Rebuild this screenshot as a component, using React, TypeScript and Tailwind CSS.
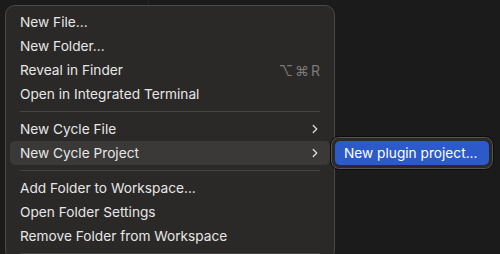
import { ChevronRight } from 'lucide-react';

type Item = { label: string; shortcut?: string; sub?: boolean; active?: boolean };

const groups: Item[][] = [
  [
    { label: 'New File...' },
    { label: 'New Folder...' },
    { label: 'Reveal in Finder', shortcut: '⌥⌘R' },
    { label: 'Open in Integrated Terminal' },
  ],
  [
    { label: 'New Cycle File', sub: true },
    { label: 'New Cycle Project', sub: true, active: true },
  ],
  [
    { label: 'Add Folder to Workspace...' },
    { label: 'Open Folder Settings' },
    { label: 'Remove Folder from Workspace' },
  ],
];

function Row({ item }: { item: Item }) {
  return (
    <div
      className={`relative flex h-6 items-center rounded-[5px] pl-[10px] pr-[8px] ${
        item.active ? 'bg-[#3a3938]' : ''
      }`}
    >
      <span className="flex-1 text-[13.7px] text-[#e6e6e6]">{item.label}</span>
      {item.shortcut && (
        <span className="text-[14px] tracking-[2px] text-[#7c7b7a]">{item.shortcut}</span>
      )}
      {item.sub && <ChevronRight size={14} strokeWidth={2.2} className="text-[#dcdcdc]" />}
      {item.active && (
        <div className="absolute left-[320px] top-[-5px] rounded-[9px] border border-[#0c0c0c] bg-[#2b2a29] p-[4px] shadow-[inset_0_0_0_1px_#545454]">
          <div className="flex h-6 w-[154px] items-center rounded-[5px] bg-[#2c5ac8] pl-[9px] text-[13.7px] text-white">
            New plugin project...
          </div>
        </div>
      )}
    </div>
  );
}

export default function App() {
  return (
    <div
      className="h-[254px] w-[500px] overflow-hidden bg-[#1b1b1b]"
      style={{ fontFamily: 'Inter, "Noto Sans", sans-serif' }}
    >
      <div className="absolute left-[148px] top-0 h-[5px] w-px bg-[#262626]" />
      <div className="ml-[5px] mt-[5px] w-[330px] rounded-[10px] border border-[#4a4948] bg-[#2a2928] px-[4px] pt-[4px]">
        {groups.map((g, i) => (
          <div key={i}>
            {i > 0 && (
              <div className="flex h-[11px] items-center px-[10px]">
                <div className="h-px flex-1 bg-[#454443]" />
              </div>
            )}
            {g.map((item) => (
              <Row key={item.label} item={item} />
            ))}
          </div>
        ))}
        <div className="flex h-[11px] items-center px-[10px]">
          <div className="h-px flex-1 bg-[#454443]" />
        </div>
      </div>
    </div>
  );
}
